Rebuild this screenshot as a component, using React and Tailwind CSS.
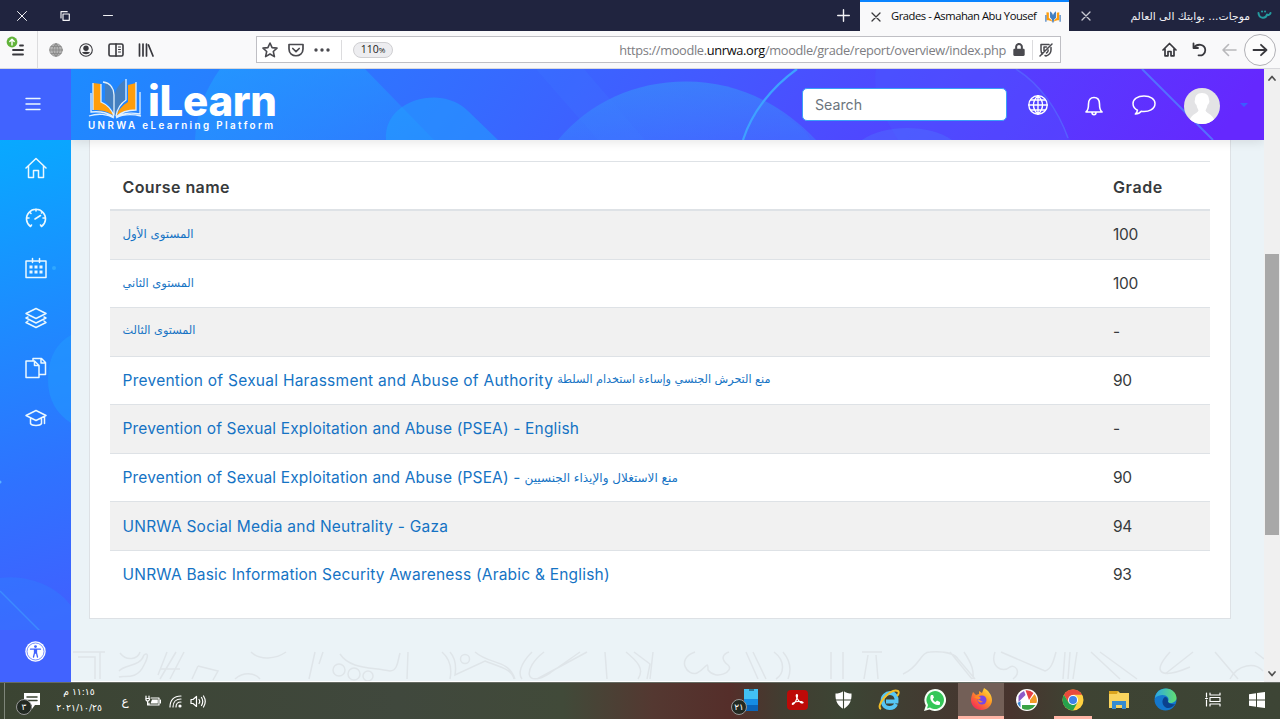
import React from "react";
import { FaLock } from "react-icons/fa";

const arabic = "font-['DejaVu_Sans',sans-serif]";

function Svg({ size = 20, vb = "0 0 20 20", w, sw = 1.5, className = "", children }) {
  return (
    <svg width={w || size} height={size} viewBox={vb} fill="none" stroke="currentColor" strokeWidth={sw} strokeLinecap="round" strokeLinejoin="round" className={`block shrink-0 ${className}`}>
      {children}
    </svg>
  );
}

function Book({ small }) {
  return (
    <svg width={small ? 16 : 54} height={small ? 12 : 40} viewBox="0 0 54 40" preserveAspectRatio="none" className="block shrink-0">
      <path d="M17 2C22 4 26 9 27 15V38C25 30 21 25 17 22Z" fill="#447fc0" />
      <path d="M37 1C31 5 28 10 27 15V38C29 30 33 25 37 23Z" fill="#447fc0" />
      <path d="M5 4 13 5V23C19 26 24 31 26 37C21 33 15 31 5 31Z" fill="#ff9d0b" />
      <path d="M48 4 40 6V23C35 26 30 31 28 37C33 33 39 31 48 31Z" fill="#ff9d0b" />
      {small ? (
        <path d="M3 13V36M27 14V38M51 13V36" stroke="#447fc0" strokeWidth="4" fill="none" />
      ) : (
        <path d="M5 4V31M13 5V23C20 26 24 31 26 37M3 14V33C12 32 20 34 26 38M15 3C23 4 26 10 26 16V36M38 0V21C32 25 29 31 28 37M48 3V31C39 31 33 33 28 38M52 13V35C42 33 33 35 28 38M1 37C10 34 20 35 26 39M28 39C35 35 44 35 53 37" stroke="#dff0ff" strokeWidth="1.3" fill="none" />
      )}
    </svg>
  );
}

function CloseX({ className }) {
  return <Svg size={10} vb="0 0 10 10" sw={1.3} className={className}><path d="M1 1 9 9M9 1 1 9" /></Svg>;
}

function TitleBar() {
  return (
    <div className="flex h-[31px] shrink-0 bg-[#20243f] text-[12px] text-[#f2f2f5]">
      <div className="flex w-[43px] items-center justify-center"><Svg size={10} vb="0 0 10 10" sw={1}><path d="M.5.5 9.5 9.5M9.5.5.5 9.5" /></Svg></div>
      <div className="flex w-[43px] items-center justify-center"><Svg size={10} vb="0 0 10 10" sw={1.2}><path d="M3 3H9.3V9.3H3ZM1 7V.7H7.2" /></Svg></div>
      <div className="flex w-[43px] items-center justify-center"><Svg size={10} vb="0 0 10 10" sw={1}><path d="M.5 4.5H9.5" /></Svg></div>
      <div className="flex-1" />
      <div className="flex w-[34px] items-center justify-center"><Svg size={13} vb="0 0 13 13" sw={1.4}><path d="M6.5.7V12.3M.7 6.5H12.3" /></Svg></div>
      <div className="flex w-[209px] items-center border-t-2 border-[#0a84ff] bg-[#f9f9fa] pl-[11px] font-['Open_Sans',sans-serif] text-[#0c0c0d]">
        <CloseX className="text-[#3a3a3d]" />
        <span className="ml-[10px] w-[154px] text-[11.2px] tracking-[-0.45px] whitespace-nowrap">Grades - Asmahan Abu Yousef</span>
        <Book small />
      </div>
      <div className="flex w-[211px] items-center pl-3">
        <CloseX className="text-[#c9cad3]" />
        <span dir="rtl" className={`${arabic} ml-auto mr-[7px] mt-[3px] text-[10.8px] whitespace-nowrap`}>موجات... بوابتك الى العالم</span>
        <Svg size={12} w={15} vb="0 0 15 12" sw={2} className="mr-[8px] text-[#249b9f]"><path d="M1.5 3C2 9 9 9 10 4.5 11 5.5 13 5 13.5 3M5 1.5H5.1M8 1.5H8.1" /></Svg>
      </div>
    </div>
  );
}

function Toolbar() {
  return (
    <div className="flex h-[38px] shrink-0 items-stretch border-b border-[#d8d8dc] bg-[#f9f9fa] text-[#38383d]">
      <div className="flex w-[38px] items-center border-r border-[#dcdcde]">
        <Svg size={22} w={26} vb="0 0 26 22" sw={1.8} className="mb-[6px] ml-[6px]">
          <path d="M7 14H17M7 18.5H17M14 9.5H17" />
          <circle cx="6" cy="6" r="5.4" fill="#62b33b" stroke="none" />
          <path d="M6 9V3.5M3.8 5.5 6 3.2 8.2 5.5" stroke="#fff" strokeWidth="1.4" />
        </Svg>
      </div>
      <div className="ml-[3px] flex items-center">
        <div className="flex w-[30px] justify-center"><Svg size={14} vb="0 0 14 14" sw={0.8}><circle cx="7" cy="7" r="6.3" fill="#b4b4b4" stroke="#8a8a8a" /><path d="M7 .7V13.3M.7 7H13.3M2 3.5H12M2 10.5H12M7 .7C3 4 3 10 7 13.3 11 10 11 4 7 .7" stroke="#858585" /></Svg></div>
        <div className="flex w-[30px] justify-center"><Svg size={14} vb="0 0 14 14" sw={1.1}><circle cx="7" cy="7" r="6.3" /><g stroke="none" fill="currentColor"><circle cx="7" cy="5.3" r="2.7" /><path d="M3 9.3C5 8.400 9 8.400 11 9.300 10 11.800 4 11.800 3 9.300Z" /></g></Svg></div>
        <div className="flex w-[30px] justify-center"><Svg size={14} w={16} vb="0 0 16 14" sw={1.6}><rect x="1" y="1" width="14" height="12" rx="1.5" /><path d="M8 1V13" /><path d="M10.5 4H12.5M10.5 6.5H12.5M10.5 9H12.5" strokeWidth="1" /></Svg></div>
        <div className="flex w-[30px] justify-center"><Svg size={14} w={16} vb="0 0 16 14" sw={1.7}><path d="M1.5 1V13M5 1V13M8.5 1V13M10.5 2 15 13" /></Svg></div>
      </div>
      <div className="my-[5px] ml-[95px] flex w-[805px] items-center border border-[#bfbfc4] bg-white text-[#4a4a4f]">
        <Svg size={16} vb="0 0 16 16" sw={1.6} className="ml-[5px]"><path d="M8 1 10.1 5.6 15 6.1 11.3 9.5 12.4 14.6 8 12 3.6 14.6 4.7 9.5 1 6.1 5.9 5.6Z" /></Svg>
        <Svg size={14} w={16} vb="0 0 16 14" sw={1.7} className="ml-[10px]"><path d="M1 1.5H15V6C15 15 1 15 1 6ZM4.8 5.5 8 8.6 11.2 5.5" /></Svg>
        <Svg size={6} w={16} vb="0 0 16 6" className="ml-[10px]"><g fill="currentColor" stroke="none"><circle cx="2" cy="3" r="1.7" /><circle cx="8" cy="3" r="1.7" /><circle cx="14" cy="3" r="1.7" /></g></Svg>
        <div className="ml-[11px] h-[20px] w-px bg-[#dcdcde]" />
        <div className="ml-[11px] flex h-[16px] w-[40px] items-center justify-center rounded-full border border-[#cfcfd2] bg-[#ededf0] font-['Open_Sans',sans-serif] text-[10.5px] text-[#222]">110<span className="text-[8px]">%</span></div>
        <div className="mt-[2px] ml-auto font-['Open_Sans',sans-serif] text-[12.8px] tracking-[-0.33px] whitespace-nowrap text-[#7d7d82]">https://moodle.<span className="text-[#0c0c0d]">unrwa.org</span>/moodle/grade/report/overview/index.php</div>
        <FaLock className="ml-[7px] h-[13px] w-[12px]" />
        <div className="ml-[7px] h-[20px] w-px bg-[#dcdcde]" />
        <Svg size={14} vb="0 0 14 14" sw={1.5} className="mr-[7px] ml-[6px]"><path d="M2 1.500H10M2 1.500V7C2 9 2.500 10 3.500 11M12 4.500V7C12 10 10 12 7 13L6 12.500M13 1 1 13M5 4V7.500M5 4H7.500M7.500 10C8.500 9.500 9.200 8.500 9.200 7" /></Svg>
      </div>
      <div className="ml-auto flex items-center">
        <div className="flex w-[30px] justify-center"><Svg size={15} vb="0 0 15 15" sw={1.7}><path d="M1 8 7.5 1.5 14 8M3 7V13.8H6V9.5H9V13.8H12V7" /></Svg></div>
        <div className="flex w-[30px] justify-center"><Svg size={15} vb="0 0 15 15" sw={1.8}><path d="M1.500 1.500V6H6M2 5.800C5 1 13 2 13.300 8 13.300 12 10 14 6.500 13.300" /></Svg></div>
        <div className="flex w-[30px] justify-center text-[#b8b8bb]"><Svg size={14} w={15} vb="0 0 15 14" sw={1.6}><path d="M14 7H1M6.5 1.5 1 7 6.5 12.5" /></Svg></div>
        <div className="mr-[4px] flex size-[32px] items-center justify-center rounded-full border border-[#b1b1b6] bg-[#fcfcfc]"><Svg size={14} w={16} vb="0 0 16 14" sw={1.8}><path d="M1.500 7H14.500M9 1.800 14.500 7 9 12.200" /></Svg></div>
      </div>
    </div>
  );
}

function HeaderArt() {
  return (
    <svg width="1193" height="71" viewBox="71 69 1193 71" className="absolute inset-0">
      <defs>
        <linearGradient id="hg" x1="0" x2="1" y1="0" y2="0.04"><stop offset="0" stopColor="#1d8bff" /><stop offset=".16" stopColor="#2a7cff" /><stop offset=".35" stopColor="#356bff" /><stop offset=".55" stopColor="#4458ff" /><stop offset=".78" stopColor="#543fff" /><stop offset="1" stopColor="#6528fe" /></linearGradient>
        <linearGradient id="hb" x1="0" x2="1" y1="0" y2="1"><stop offset="0" stopColor="#22a0ff" stopOpacity=".65" /><stop offset="1" stopColor="#22a0ff" stopOpacity=".25" /></linearGradient>
        <linearGradient id="hc" x1="0" x2="0" y1="0" y2="1"><stop offset="0" stopColor="#36a0f8" stopOpacity=".5" /><stop offset="1" stopColor="#36a0ff" stopOpacity=".28" /></linearGradient>
      </defs>
      <rect x="71" y="69" width="1193" height="71" fill="url(#hg)" />
      <path d="M220 69C205 90 196 113 195 140H434L365 69Z" fill="url(#hb)" />
      <path d="M386 140C384 114 408 97 435 97.500 450 98 461 104 468 111L498 140Z" fill="#1fa3ff" opacity=".5" />
      <path d="M558 140C590 102 635 81.500 686 81.500 735 81.500 780 102 816 140Z" fill="url(#hc)" />
      <path d="M536 69H584L645 140H598Z" fill="#3f83ff" opacity=".16" />
      <path d="M797 69C772 87 752 112 743 140" stroke="#3ea2ff" strokeWidth="2.200" fill="none" />
      <path d="M780 114C795 121 805 130 811 140H780Z" fill="#3586ff" opacity=".15" />
      <path d="M876 69C872 92 882 114 898 140H1070C1058 110 1040 85 1016 69Z" fill="#466bff" opacity=".22" />
      <path d="M862 140C884 124 930 124 952 140Z" fill="#4e7bff" opacity=".35" />
      <path d="M1016 69C1040 84 1058 110 1068 138" stroke="#5877ff" strokeWidth="1.500" fill="none" opacity=".55" />
      <path d="M1142 69 1213 140" stroke="#4f8cff" strokeWidth="2" opacity=".7" />
    </svg>
  );
}

function Header() {
  return (
    <header className="relative z-10 h-[71px] shrink-0 text-white shadow-[0_2px_10px_rgba(0,0,0,0.10)]">
      <HeaderArt />
      <div className="relative flex h-full items-center">
        <div className="ml-[17px] flex w-[200px] flex-col">
          <div className="flex h-[41px] items-end">
            <Book />
            <span className="ml-[6px] font-['Inter',sans-serif] text-[42px] leading-[37px] font-extrabold tracking-[-0.3px]">iLearn</span>
          </div>
          <span className="mt-[1px] font-['Inter',sans-serif] text-[9.800px] leading-[12px] font-semibold tracking-[2.400px] whitespace-nowrap">UNRWA eLearning Platform</span>
        </div>
        <div className="mr-[21px] ml-auto flex h-[33px] w-[205px] items-center rounded-[5px] border border-[#3aa0f8] bg-white pl-[12px] font-['Inter',sans-serif] text-[14.200px] text-[#6c757d]">Search</div>
        <Svg size={20} vb="0 0 20 20" sw={1.4}><circle cx="10" cy="10" r="9.200" /><path d="M10 .8V19.200M.8 10H19.200M2.800 5H17.200M2.800 15H17.200M10 .8C4 6 4 14 10 19.200 16 14 16 6 10 .8" /></Svg>
        <Svg size={20} w={18} vb="0 0 18 20" sw={1.6} className="mt-[2px] ml-[37px]"><path d="M1 16C3 14.500 3.500 12 3.500 8 3.500 4 5.500 1.500 9 1.500S14.500 4 14.500 8C14.500 12 15 14.500 17 16ZM7 16.500C7 19.500 11 19.500 11 16.500" /></Svg>
        <Svg size={20} w={24} vb="0 0 24 20" sw={1.5} className="ml-[29px]"><path d="M12 1C5.500 1 1 4 1 8.500 1 11.500 3 14 5.500 15.200 5.300 17 4.500 18 3.300 19 6 19 8 18 9.200 16.300 17 17.300 23 14 23 8.500 23 4 18.500 1 12 1Z" /></Svg>
        <svg width="36" height="36" viewBox="0 0 36 36" className="mt-[2px] ml-[28px] block"><clipPath id="av"><circle cx="18" cy="18" r="18" /></clipPath><g clipPath="url(#av)"><rect width="36" height="36" fill="#e3e3e5" /><path d="M18 5C13 5 11 8 11 12 10 13 11 16 12.500 17 13 20 14 21 14.500 22.500 13 26 6 26 4.500 36H31.500C30 26 23 26 21.500 22.500 22 21 23 20 23.500 17 25 16 26 13 25 12 25 8 23 5 18 5Z" fill="#fff" /></g></svg>
        <svg width="8" height="4" viewBox="0 0 8 4" className="mr-[16px] ml-[20px]"><path d="M0 0H8L4 4Z" fill="#3b5cff" /></svg>
      </div>
    </header>
  );
}

function Sidebar() {
  return (
    <aside className="relative flex w-[71px] shrink-0 flex-col overflow-hidden text-[#eaf8ff]">
      <svg width="71" height="613" viewBox="0 69 71 613" preserveAspectRatio="none" className="absolute inset-0">
        <defs><linearGradient id="sg" gradientUnits="userSpaceOnUse" x1="0" y1="140" x2="130" y2="600"><stop offset="0" stopColor="#08a9ff" /><stop offset=".35" stopColor="#1c8dff" /><stop offset=".7" stopColor="#2f72ff" /><stop offset="1" stopColor="#4060ff" /></linearGradient></defs>
        <rect y="69" width="71" height="613" fill="url(#sg)" />
        <rect y="69" width="71" height="71" fill="#4163ff" />
        <path d="M71 335C55 344 48 360 48 380S57 414 71 423Z" fill="#229cff" opacity=".5" />
        <circle cx="54" cy="268" r="2" fill="#2fa8ff" />
        <path d="M0 578C28 574 58 587 71 606V630H0Z" fill="#2e83ff" opacity=".35" />
        <path d="M0 591 40 631" stroke="#3f97ff" strokeWidth="1.500" opacity=".7" />
        <rect y="630" width="71" height="52" fill="#4163ff" />
        <circle cx="0" cy="482" r="1.500" fill="#5ab0ff" />
      </svg>
      <div className="relative flex h-[70px] items-center pl-[25px]"><Svg size={14} w={16} vb="0 0 16 14" sw={1.400}><path d="M1 1.500H15M1 7H15M1 12.500H15" /></Svg></div>
      <nav className="relative mt-[4px] flex flex-col items-center">
        <div className="flex h-[50px] items-center"><Svg size={22} vb="0 0 22 22"><path d="M1 11 11 1.500 21 11M3.500 9V20.500H8.500V13.500H13.500V20.500H18.500V9" /></Svg></div>
        <div className="flex h-[50px] items-center"><Svg size={22} vb="0 0 22 22" sw={1.600}><path d="M5.500 19.500A9.500 9.500 0 1 1 16.500 19.500M10 12 15.500 8.500M11 2V4M2 11H4M18 11H20M4.500 5 6 6.500M17.500 5 16.500 6M5.500 19.500 6.500 18M16.500 19.500 15.500 18" /></Svg></div>
        <div className="flex h-[50px] items-center"><Svg size={22} vb="0 0 22 22"><path d="M1 4H21V20.500H1ZM7.500 1.500V5.500M14.500 1.500V5.500" /><g fill="currentColor" stroke="none"><path d="M4.500 8.500h3v3h-3zM9.500 8.500h3v3h-3zM14.500 8.500h3v3h-3zM4.500 13.500h3v3h-3zM9.500 13.500h3v3h-3zM14.500 13.500h3v3h-3z" /></g></Svg></div>
        <div className="flex h-[50px] items-center"><Svg size={22} vb="0 0 22 22"><path d="M11 1.500 21 6.500 11 11.500 1 6.500ZM3 10 1 11 11 16 21 11 19 10M3 14 1 15.500 11 20.500 21 15.500 19 14" /></Svg></div>
        <div className="flex h-[50px] items-center"><Svg size={22} vb="0 0 22 22"><path d="M1 4H9.500L14 8.500V20.500H1ZM9.500 4V8.500H14M8 3.500V1.500H16.500L20.500 5.500V17.500H15M16 1.500V6H20.500" /></Svg></div>
        <div className="flex h-[50px] items-center"><Svg size={22} vb="0 0 22 22"><path d="M11 3.500 21 8.500 11 13.500 1 8.500ZM5.500 11V16.500C7 19 15 19 16.500 16.500V11M19.500 9.500V16.500" /></Svg></div>
      </nav>
      <div className="relative mt-auto mb-[20px] flex justify-center"><svg width="21" height="21" viewBox="0 0 21 21"><circle cx="10.500" cy="10.500" r="10.200" fill="#fff" /><circle cx="10.500" cy="10.500" r="8.500" fill="none" stroke="#4163ff" strokeWidth=".7" /><circle cx="10.500" cy="5.600" r="1.400" fill="#4163ff" /><path d="M5.500 8.200H15.500M9.500 8.500V12L8.500 16M11.500 8.500V12L12.500 16M10.500 8.500V12" fill="none" stroke="#4163ff" strokeWidth="1.300" strokeLinecap="round" /></svg></div>
    </aside>
  );
}

const rows = [
  { ar: "المستوى الأول", grade: "100", arSize: "text-[11.800px]" },
  { ar: "المستوى الثاني", grade: "100", arSize: "text-[11.400px]" },
  { ar: "المستوى الثالث", grade: "-", arSize: "text-[11.300px]" },
  { en: "Prevention of Sexual Harassment and Abuse of Authority", ar: "منع التحرش الجنسي وإساءة استخدام السلطة", grade: "90", track: "tracking-[0.260px]", arSize: "text-[11.200px]" },
  { en: "Prevention of Sexual Exploitation and Abuse (PSEA) - English", grade: "-", track: "tracking-[0.160px]" },
  { en: "Prevention of Sexual Exploitation and Abuse (PSEA) -", ar: "منع الاستغلال والإيذاء الجنسيين", grade: "90", track: "tracking-[0.160px]", arSize: "text-[12px]" },
  { en: "UNRWA Social Media and Neutrality - Gaza", grade: "94", track: "tracking-[0.220px]" },
  { en: "UNRWA Basic Information Security Awareness (Arabic & English)", grade: "93", track: "tracking-[0.210px]" },
];

function Grades() {
  return (
    <div className="mr-[33px] ml-[18px] h-[479px] shrink-0 border-x border-b border-[#dde1e5] bg-white px-[20px] pt-[21px] font-['Inter',sans-serif] text-[15.500px]">
      <div className="flex h-[50px] items-center border-t border-b-2 border-[#dee2e6] px-[12.500px] pt-[2px] text-[16px] font-semibold text-[#373a3c]">
        <span className="flex-1 tracking-[0.420px]">Course name</span><span className="w-[84.500px] tracking-[0.600px]">Grade</span>
      </div>
      {rows.map((r, i) => (
        <div key={i} className={`flex h-[48.570px] items-center border-b px-[12.500px] whitespace-nowrap text-[#373a3c] ${i === 7 ? "border-transparent" : "border-[#dee2e6]"} ${i % 2 ? "bg-white" : "bg-[#f1f1f1]"}`}>
          <a className="flex flex-1 items-center gap-[4px] text-[#1573c4]">
            {r.en && <span className={r.track}>{r.en}</span>}
            {r.ar && <span dir="rtl" className={`${arabic} ${r.arSize}`}>{r.ar}</span>}
          </a>
          <span className="w-[84.500px] tracking-[-0.300px]">{r.grade}</span>
        </div>
      ))}
    </div>
  );
}

function Pattern() {
  return (
    <svg width="1193" height="30" viewBox="71 652 1193 30" className="mt-auto block shrink-0" fill="none" stroke="#dfe5e9" strokeWidth="1.500">
      <path d="M73 653H105M78 658H95V680M100 653V680M120 654C127 663 138 660 140 653M119 672C125 665 140 668 144 656 148 653 149 657 144 666 137 682 123 676 119 678M167 653 158 676M176 653 160 680M184 653 170 680M160 670H180M198 667 218 672 213 681M192 680 198 667M251 653C260 662 276 660 286 653M235 680C243 673 254 673 260 680M315 653 309 680M323 653 319 665M340 655C350 670 370 668 390 672 398 672 398 660 400 654" />
      <circle cx="339" cy="671" r="6" /><circle cx="354" cy="675" r="6" /><circle cx="368" cy="677" r="5" /><circle cx="465" cy="660" r="4.500" />
      <path d="M408 653 407 680M442 653C450 660 452 670 450 680M450 653C456 660 456 670 455 676L485 662C500 668 512 670 514 680M475 653C490 666 508 660 515 680M532 653C520 665 518 675 522 680M544 653C522 670 525 690 550 674L580 653M537 680 587 653M605 653 607 680M626 653C637 662 645 670 638 680M634 653 650 665 647 680M653 653 650 680M695 653C675 660 688 678 697 674 706 670 708 660 708 671 716 682 735 672 728 666 720 660 723 655 729 653M746 653 758 680M753 653 766 680M774 653C786 662 784 675 776 680M783 653C793 665 790 675 788 680M831 653V680M843 653V680M862 653H882M868 656 864 680M876 656 878 680M903 675C920 668 920 653 930 653 945 652 955 655 958 660L975 680M950 653 972 680M964 653C972 665 974 672 973 680M995 653C990 667 1002 675 1010 668 1015 665 1022 673 1013 680M1001 653 1045 672C1052 670 1054 660 1056 653M1065 653 1063 680M1070 653 1068 680M1077 653 1073 680M1091 653 1120 680M1100 653 1137 680M1170 653C1150 675 1162 680 1190 668M1193 653 1165 675M1215 653 1238 680M1230 680C1238 665 1255 663 1263 672M1255 653 1264 660" />
    </svg>
  );
}

function Page() {
  return (
    <div className="flex h-[613px] shrink-0">
      <Sidebar />
      <div className="flex w-[1193px] shrink-0 flex-col overflow-hidden border-b border-white bg-[#ebf3f7]">
        <Header />
        <Grades />
        <Pattern />
      </div>
      <div className="flex w-[16px] shrink-0 flex-col items-center bg-[#f0f0f0] text-[#505050]">
        <Svg size={6} w={8} vb="0 0 8 6" sw={1.700} className="mt-[6px]"><path d="M1 5 4 1.500 7 5" /></Svg>
        <div className="mt-[173px] h-[281px] w-[14px] bg-[#a8a8a8]" />
        <Svg size={6} w={8} vb="0 0 8 6" sw={1.700} className="mt-auto mb-[5px]"><path d="M1 1 4 4.500 7 1" /></Svg>
      </div>
    </div>
  );
}

function Badge({ children, className }) {
  return <span className={`absolute flex size-[16px] items-center justify-center rounded-full border border-[#999] bg-[#222922] ${arabic} text-[9px] leading-none text-white ${className}`}>{children}</span>;
}

function TaskButton({ children, active, open }) {
  return <div className={`relative flex w-[46px] shrink-0 items-center justify-center border-b-[3px] ${active ? "border-[#ffb5a6] bg-[#735f57]" : "border-transparent"}`}>{children}{open && <span className="absolute -bottom-[3px] h-[3px] w-[38px] bg-[#ffb5a6]" />}</div>;
}

function Taskbar() {
  return (
    <div className="flex h-[37px] shrink-0 border-t border-[#666b63] bg-[linear-gradient(90deg,#3b4432_0,#40483d_31%,#414a39_44%,#543831_51%,#552e2a_57%,#423d31_61%,#3c4534_66%,#433a31_73%,#48342e_79%,#3e4333_84%,#3d4535_100%)] text-white">
      <div className="w-[5px] border-r border-[#7e8579]" />
      <div className="relative flex w-[48px] items-center justify-center">
        <Svg size={16} w={17} vb="0 0 17 16" sw={0} className="ml-[4px]"><path d="M1 0H17V12H12L9 16V12H1Z" fill="#fff" /><path d="M4 4H14M4 7.500H14" stroke="#3b4432" strokeWidth="1.500" /></Svg>
        <Badge className="top-[16px] left-[11px]">٣</Badge>
      </div>
      <div dir="rtl" className={`flex w-[52px] flex-col items-center justify-center pb-[2px] ${arabic} text-[9.200px] leading-[16px] whitespace-nowrap`}><span>١١:١٥ م</span><span>٢٠٢١/١٠/٢٥</span></div>
      <div className={`flex w-[40px] items-center justify-center ${arabic} text-[12px]`}>ع</div>
      <div className="flex w-[70px] items-center gap-[8px]">
        <Svg size={12} w={16} vb="0 0 16 12" sw={1.200}><path d="M6 3H14V10H4V8M15.500 5V8M1 1V3M4 1V3M.8 3.500H4.500C4.500 7 1 7 .8 3.500M2.600 6V10H4" /><path d="M7 4.500H12.800V8.500H5.500Z" fill="currentColor" stroke="none" /></Svg>
        <Svg size={13} vb="0 0 13 13" sw={1.200}><path d="M1 12C1 5 5 1 12 1M4 12C4 7 7 4 12 4M7 12C7 9 9 7 12 7" /><circle cx="11" cy="11" r="1.600" fill="currentColor" stroke="none" /></Svg>
        <Svg size={13} w={16} vb="0 0 16 13" sw={1.200}><path d="M1 4.500H3L6.500 1.500V11.500L3 8.500H1ZM9 4.500Q10.500 6.500 9 8.500M11.500 2.500Q14 6.500 11.500 10.500M13.500 1Q17 6.500 13.500 12" /></Svg>
      </div>
      <div className="flex-1" />
      <TaskButton><svg width="14" height="23" viewBox="0 0 14 23"><path d="M0 1H14V12H0Z" fill="#42c1f4" /><path d="M0 11H14V17H0Z" fill="#168de4" /><path d="M0 17H14V23H0Z" fill="#0b64b8" /><path d="M5 2H10" stroke="#134" /></svg><Badge className="top-[16px] left-[3px]">٢١</Badge></TaskButton>
      <TaskButton><svg width="21" height="20" viewBox="0 0 21 20"><rect width="21" height="20" rx="4" fill="#bd0a08" /><path d="M9.800 4.500C11.500 4.500 9.800 10 7.500 13 5.800 15.500 4 14 6.500 12.800 10 11 14.500 11 16 12.500 15.500 14 12 12 10.500 9 9 6.500 9 4.500 9.800 4.500Z" fill="none" stroke="#fff" strokeWidth="1.200" /></svg></TaskButton>
      <TaskButton><svg width="17" height="18" viewBox="0 0 17 18"><path d="M8.500 0C11 2 14 2.500 16.500 2.500 17 10 14 15 8.500 18 3 15 0 10 .5 2.500 3 2.500 6 2 8.500 0Z" fill="#fff" /><path d="M8.500 0V18M0 9H17" stroke="#3c4534" strokeWidth="1.100" /></svg></TaskButton>
      <TaskButton><svg width="22" height="22" viewBox="0 0 22 22"><path d="M18 15C16 20 7 21 5 14 3 7 9 4 12 4 17 4 19 8 18.500 12.500H8" fill="none" stroke="#57c6f4" strokeWidth="4" /><path d="M3 20C-3 17 12-1 20 2 22 4 19 7 19 7" fill="none" stroke="#f3bd27" strokeWidth="2" /></svg></TaskButton>
      <TaskButton><svg width="22" height="22" viewBox="0 0 22 22"><path d="M11 0A11 11 0 1 1 5.500 20.500L0 22 1.800 16.500A11 11 0 0 1 11 0" fill="#f4fff6" /><path d="M11 2A9 9 0 1 1 6 18.500L3 19.500 4 16A9 9 0 0 1 11 2" fill="#34c759" /><path d="M7 6C4 11 11 18 16 15.500V13L13 11.500 11.500 13C10 12.500 9 11 8.800 10L10 8.500 9 6Z" fill="#fff" /></svg></TaskButton>
      <TaskButton active><svg width="23" height="23" viewBox="0 0 23 23"><defs><linearGradient id="ff" x1="1" y1="0" x2=".2" y2="1"><stop stopColor="#fff04b" /><stop offset=".45" stopColor="#ff9822" /><stop offset="1" stopColor="#f42459" /></linearGradient></defs><path d="M3 4 6 7 9 6 9 3 12 5 14 0C18 2 22 7 22 12 22 18 17 22 11.500 22S1 18 1 12C1 9 2 7 3 4Z" fill="url(#ff)" /><circle cx="12" cy="12" r="4.500" fill="#7847e4" /><path d="M4 9C7 8 9 8 11 10L8 12C8 14 10 15 13 14" fill="#ff8b22" /></svg></TaskButton>
      <TaskButton><svg width="22" height="22" viewBox="0 0 22 22"><circle cx="11" cy="11" r="11" fill="#fff" /><path d="M2.500 7A10 10 0 0 1 8 2L9.500 6 2.500 13Z" fill="#8d5ac8" /><path d="M9.500 1.300A10 10 0 0 1 17.500 4L13 11Z" fill="#e64042" /><path d="M18.500 5A10 10 0 0 1 20.500 14H14V11Z" fill="#f29a28" /><path d="M19.500 16A10 10 0 0 1 6 19.500V16Z" fill="#39a344" /><path d="M1.500 14A10 10 0 0 0 4.500 18.500V12Z" fill="#3a83cf" /></svg></TaskButton>
      <TaskButton open><svg width="22" height="22" viewBox="0 0 22 22"><circle cx="11" cy="11" r="10.500" fill="#ffd140" /><path d="M1.900 5.800A10.500 10.500 0 0 1 20.100 5.800H11L6.500 13.600Z" fill="#e84a3c" /><path d="M1.900 5.800A10.500 10.500 0 0 0 11 21.500L15.500 13.600H6.500Z" fill="#27a14c" /><circle cx="11" cy="11" r="5" fill="#fff" /><circle cx="11" cy="11" r="4" fill="#3d82e8" /></svg></TaskButton>
      <TaskButton><svg width="20" height="18" viewBox="0 0 20 18"><path d="M0 0H9L11 2H20V17H0Z" fill="#f9d45e" /><path d="M0 0H9L8 3H0Z" fill="#dba51e" /><path d="M3 10H17V18H13V14H7V18H3Z" fill="#378ccf" /></svg></TaskButton>
      <TaskButton><svg width="23" height="23" viewBox="0 0 23 23"><defs><linearGradient id="eg"><stop stopColor="#2ba6e4" /><stop offset="1" stopColor="#62df72" /></linearGradient></defs><circle cx="11.500" cy="11.500" r="11" fill="#1477cd" /><path d="M1 10C2 4 6 .5 12 .5 18 .5 22.500 5 22.500 10 22.500 15 15 16 14 14 17 8 8 4 1 10Z" fill="url(#eg)" /><path d="M14 14C16 17 21 16 21 16 18 21 12 21 10 18 7 14 9 10 11 9 14 9 14 12 14 14Z" fill="#0b428e" /></svg></TaskButton>
      <div className="flex w-[49px] items-center justify-center pb-[3px]"><Svg size={15} w={16} vb="0 0 16 15" sw={1.200}><path d="M5 1V3H15V1M5 14V12H15V14M5 5.500H15V9.500H5ZM1.500 1V5M1.500 8V14M.5 6.500H2.500" /></Svg></div>
      <div className="flex w-[43px] items-center justify-center pr-[3px] pb-[2px]"><svg width="16" height="16" viewBox="0 0 16 16" fill="#fff"><path d="M0 2.300 7 1.300V7.500H0ZM8 1.100 16 0V7.500H8ZM0 8.500H7V14.700L0 13.700ZM8 8.500H16V16L8 14.900Z" /></svg></div>
    </div>
  );
}

export default function App() {
  return (
    <div className="flex h-[719px] w-[1280px] flex-col overflow-hidden bg-white">
      <TitleBar />
      <Toolbar />
      <Page />
      <Taskbar />
    </div>
  );
}
